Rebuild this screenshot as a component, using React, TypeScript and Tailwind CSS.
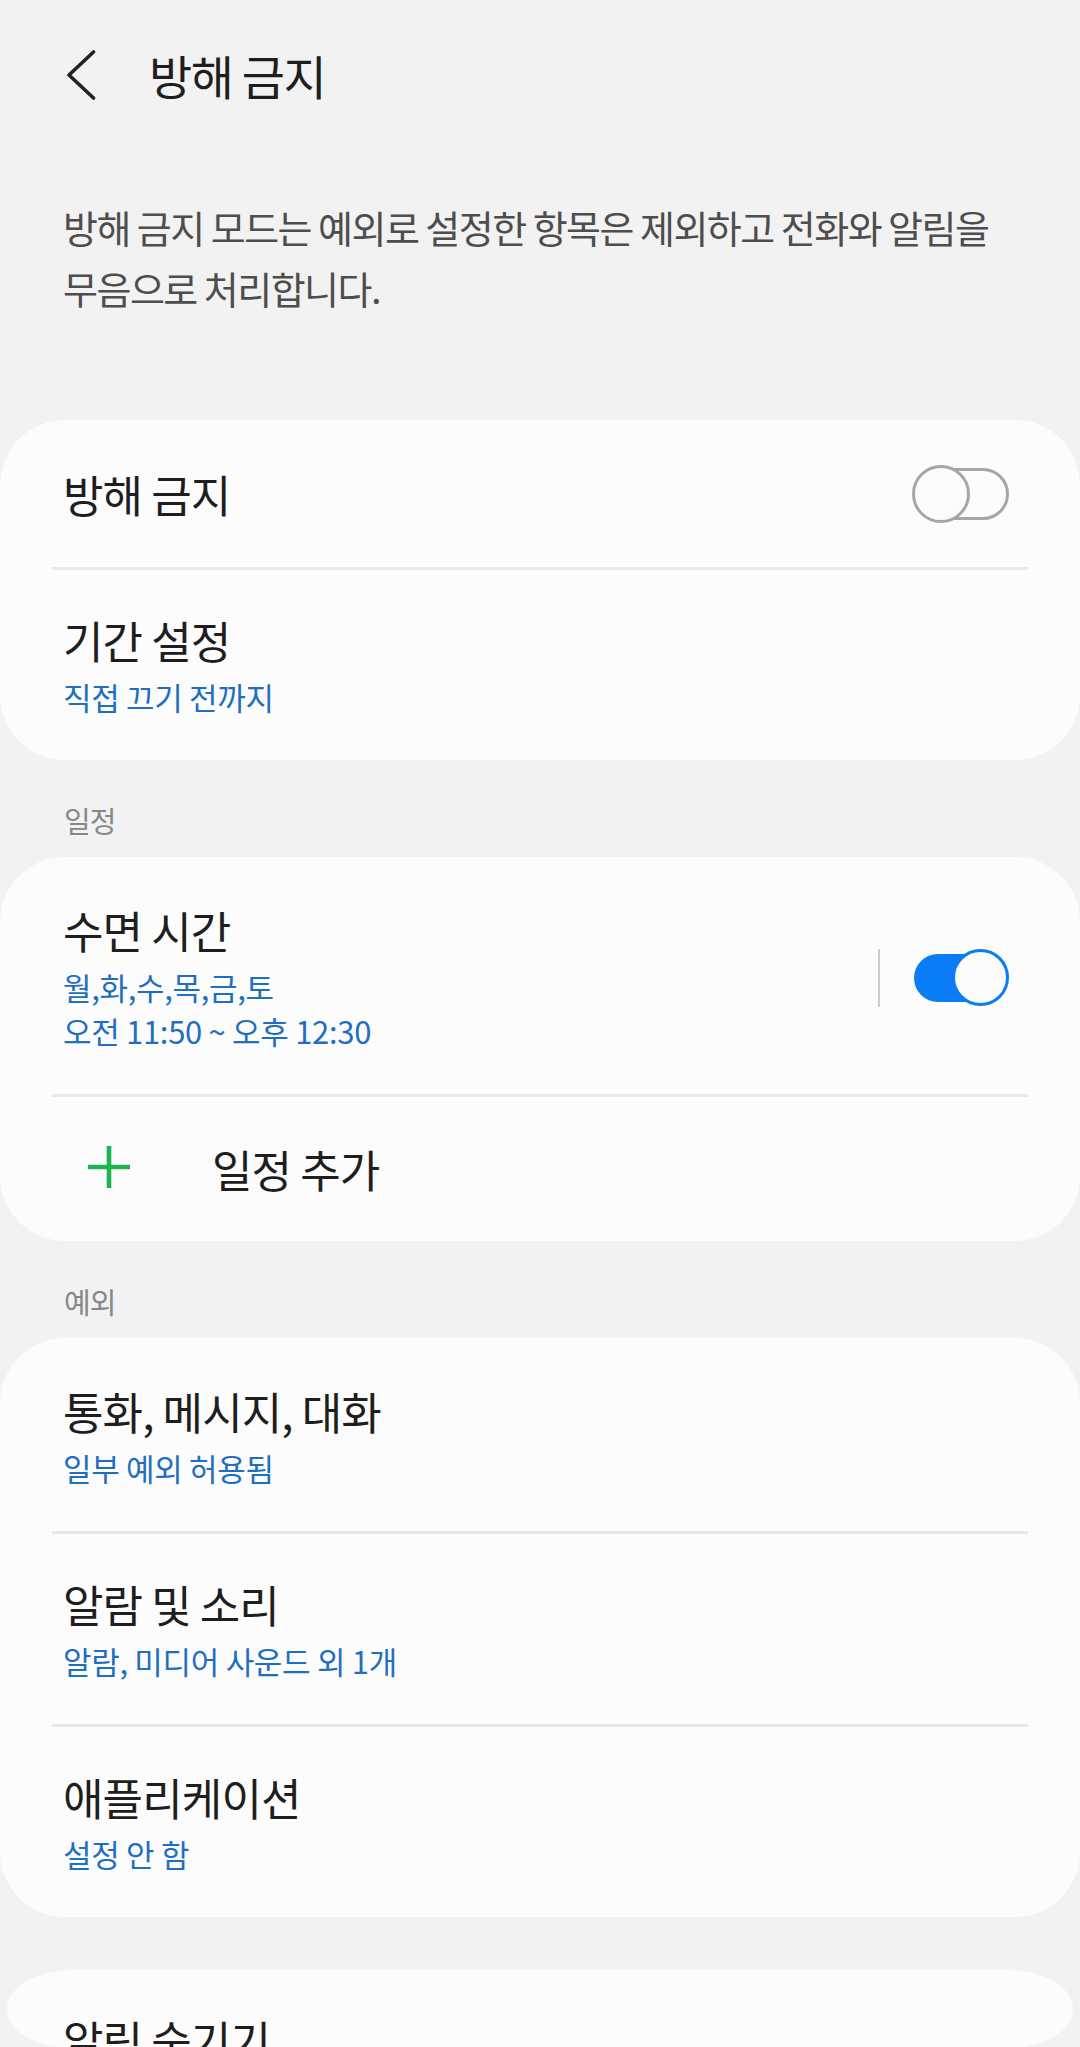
import React from "react";

function ToggleOff() {
  return (
    <div className="relative w-[97px] h-[58px] shrink-0">
      <div className="absolute right-0 top-[3px] w-[94px] h-[52px] rounded-full border-[3px] border-[#a6a6a6]" />
      <div className="absolute left-0 top-0 w-[58px] h-[58px] rounded-full border-[3px] border-[#a6a6a6] bg-[#fbfbfb]" />
    </div>
  );
}

function ToggleOn() {
  return (
    <div className="relative w-[95px] h-[57px] shrink-0">
      <div className="absolute left-0 top-[5px] w-[90px] h-[48px] rounded-full bg-[#0a7cf5]" />
      <div className="absolute right-0 top-0 w-[57px] h-[57px] rounded-full border-[3px] border-[#0a7cf5] bg-[#fbfbfb]" />
    </div>
  );
}

function Divider() {
  return <div className="mx-[52px] h-[3px] bg-[#e8e8e8]" />;
}

function Title({ children }: { children: React.ReactNode }) {
  return (
    <div className="text-[44px] leading-[56px] tracking-[-0.02em] text-[#1e1e1e]">
      {children}
    </div>
  );
}

function Sub({ children }: { children: React.ReactNode }) {
  return (
    <div className="text-[31px] leading-[44px] tracking-[-0.01em] text-[#1f6fc1]">
      {children}
    </div>
  );
}

function SectionHeader({ label }: { label: string }) {
  return (
    <div className="px-[64px] pt-[40px] pb-[17px] text-[29px] leading-[40px] tracking-[-0.03em] text-[#878787]">
      {label}
    </div>
  );
}

export default function App() {
  return (
    <div className="w-[1080px] min-h-[2047px] bg-[#f2f2f2] font-['Noto_Sans_CJK_KR',sans-serif]">
      {/* Header */}
      <div className="flex items-center h-[150px] pl-[66px]">
        <svg width="30" height="50" viewBox="0 0 30 50" fill="none">
          <path
            d="M27.5 2 L3 25 L27.5 48"
            stroke="#222"
            strokeWidth="3.6"
            strokeLinecap="round"
            strokeLinejoin="round"
          />
        </svg>
        <h1 className="ml-[53px] text-[47px] leading-[56px] tracking-[-0.03em] text-[#1e1e1e] font-normal">
          방해 금지
        </h1>
      </div>

      {/* Description */}
      <p className="mt-[46px] px-[63px] text-[38px] leading-[61px] tracking-[-0.04em] text-[#4d4d4d]">
        방해 금지 모드는 예외로 설정한 항목은 제외하고 전화와 알림을
        <br />
        무음으로 처리합니다.
      </p>

      {/* Card 1 */}
      <div className="mt-[102px] bg-[#fcfcfc] rounded-[65px]">
        <div className="flex items-center justify-between h-[147px] pl-[63px] pr-[71px]">
          <Title>방해 금지</Title>
          <ToggleOff />
        </div>
        <Divider />
        <div className="pl-[63px] pt-[42px] pb-[41px]">
          <Title>기간 설정</Title>
          <div className="mt-[7px]">
            <Sub>직접 끄기 전까지</Sub>
          </div>
        </div>
      </div>

      <SectionHeader label="일정" />

      {/* Card 2 */}
      <div className="bg-[#fcfcfc] rounded-[65px]">
        <div className="flex items-center justify-between pl-[63px] pr-[71px] pt-[45px] pb-[41px]">
          <div>
            <Title>수면 시간</Title>
            <div className="mt-[7px]">
              <Sub>월,화,수,목,금,토</Sub>
              <Sub>오전 11:50 ~ 오후 12:30</Sub>
            </div>
          </div>
          <div className="flex items-center">
            <div className="w-[2px] h-[58px] bg-[#cccccc] mr-[34px]" />
            <ToggleOn />
          </div>
        </div>
        <Divider />
        <div className="flex items-center h-[144px] pl-[88px]">
          <svg width="42" height="42" viewBox="0 0 42 42" className="mt-[-4px]">
            <path d="M21 0 V42 M0 21 H42" stroke="#1db350" strokeWidth="4.6" />
          </svg>
          <div className="ml-[82px]">
            <Title>일정 추가</Title>
          </div>
        </div>
      </div>

      <SectionHeader label="예외" />

      {/* Card 3 */}
      <div className="bg-[#fcfcfc] rounded-[65px]">
        <div className="pl-[63px] pt-[45px] pb-[41px]">
          <Title>통화, 메시지, 대화</Title>
          <div className="mt-[7px]">
            <Sub>일부 예외 허용됨</Sub>
          </div>
        </div>
        <Divider />
        <div className="pl-[63px] pt-[42px] pb-[41px]">
          <Title>알람 및 소리</Title>
          <div className="mt-[7px]">
            <Sub>알람, 미디어 사운드 외 1개</Sub>
          </div>
        </div>
        <Divider />
        <div className="pl-[63px] pt-[42px] pb-[41px]">
          <Title>애플리케이션</Title>
          <div className="mt-[7px]">
            <Sub>설정 안 함</Sub>
          </div>
        </div>
      </div>

      {/* Card 4 (partially visible) */}
      <div className="mt-[53px] mx-[7px] h-[78px] bg-[#fcfcfc] rounded-[65px/39px] pl-[56px] pt-[42px]">
        <Title>알림 숨기기</Title>
      </div>
    </div>
  );
}
